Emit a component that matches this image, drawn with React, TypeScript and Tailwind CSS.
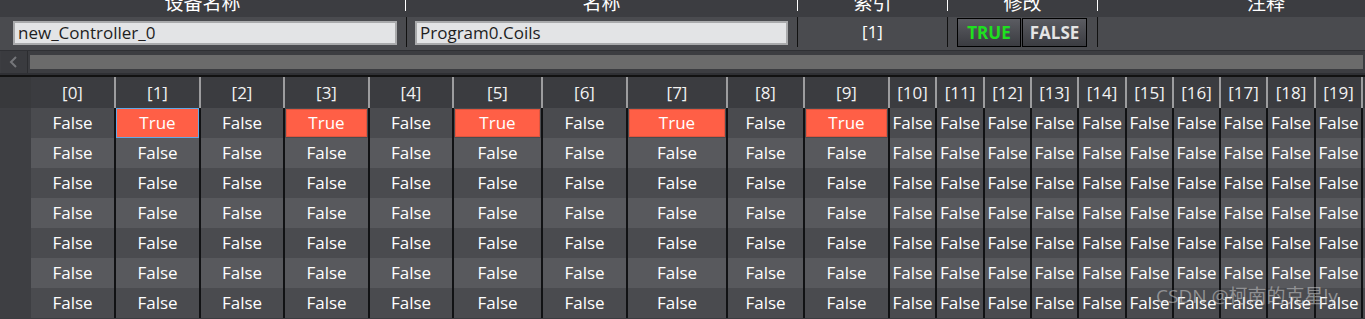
import React from "react";

const colW = [
  "w-[85px]", "w-[85px]", "w-[84px]", "w-[85px]", "w-[84px]",
  "w-[89px]", "w-[85px]", "w-[100px]", "w-[77px]", "w-[85px]",
  "w-[47px]", "w-[48px]", "w-[47px]", "w-[47px]", "w-[48px]",
  "w-[47px]", "w-[47px]", "w-[47px]", "w-[48px]", "w-[47px]",
];

const rows = 7;

function DataCell({ w, value, selected, rowBg }: { w: string; value: boolean; selected: boolean; rowBg: string }) {
  return (
    <div className={`${w} ${rowBg} shrink-0 h-full border-r-2 border-[#111214]`}>
      {value ? (
        selected ? (
          <div className="h-full flex items-center justify-center bg-[#ff5f46] border border-[#62a9e6] text-white pb-[1px]">True</div>
        ) : (
          <div className="h-full p-[1px]">
            <div className="h-full flex items-center justify-center bg-[#ff5f46] border border-[#e0553e] text-white pb-[1px]">True</div>
          </div>
        )
      ) : (
        <div className="h-full flex items-center justify-center text-white pb-[1px]">False</div>
      )}
    </div>
  );
}

export default function App() {
  return (
    <div className="relative w-[1365px] h-[319px] overflow-hidden bg-[#3c3d41] font-['Open_Sans','Noto_Sans_CJK_SC',sans-serif] text-[17px]">
      {/* top header row */}
      <div className="flex h-[17px] overflow-hidden bg-[#3c3d41] text-white text-[19px] font-['Noto_Sans_CJK_SC',sans-serif] items-start">
        <div className="w-[405px] shrink-0 text-center leading-[19px] mt-[-8px]">设备名称</div>
        <div className="w-px h-[11px] bg-white shrink-0" />
        <div className="w-[391px] shrink-0 text-center leading-[19px] mt-[-8px]">名称</div>
        <div className="w-px h-[11px] bg-white shrink-0" />
        <div className="w-[149px] shrink-0 text-center leading-[19px] mt-[-8px]">索引</div>
        <div className="w-px h-[11px] bg-white shrink-0" />
        <div className="w-[149px] shrink-0 text-center leading-[19px] mt-[-8px]">修改</div>
        <div className="w-px h-[11px] bg-white shrink-0" />
        <div className="w-[336px] shrink-0 text-center leading-[19px] mt-[-8px]">注释</div>
      </div>

      {/* input row */}
      <div className="flex h-[33px] bg-[#4a4b4f] items-start">
        <div className="w-[406px] shrink-0 pl-[13px] pt-[4px]">
          <div className="w-[384px] h-[24px] bg-[#e3e4e6] border-2 border-[#a9aaac] text-[#1e1e1e] leading-[19px] pl-[3px] text-[17px]">new_Controller_0</div>
        </div>
        <div className="w-px h-[30px] bg-[#111] shrink-0" />
        <div className="w-[390px] shrink-0 pl-[8px] pt-[4px]">
          <div className="w-[373px] h-[24px] bg-[#e3e4e6] border-2 border-[#a9aaac] text-[#1e1e1e] leading-[19px] pl-[3px] text-[17px]">Program0.Coils</div>
        </div>
        <div className="w-px h-[30px] bg-[#111] shrink-0" />
        <div className="w-[149px] h-[30px] shrink-0 flex items-center justify-center text-white">[1]</div>
        <div className="w-px h-[30px] bg-[#111] shrink-0" />
        <div className="w-[149px] shrink-0 pl-[9px] pt-[1px] flex gap-[1px]">
          <div className="w-[64px] h-[29px] border border-black bg-linear-to-b from-[#5b5c62] to-[#3b3c41] flex items-center justify-center font-bold text-[17px] text-[#1fe01f]">TRUE</div>
          <div className="w-[65px] h-[29px] border border-black bg-linear-to-b from-[#5b5c62] to-[#3b3c41] flex items-center justify-center font-bold text-[17px] text-[#e4e4e4]">FALSE</div>
        </div>
        <div className="w-px h-[30px] bg-[#111] shrink-0" />
      </div>

      {/* scrollbar */}
      <div className="bg-[#2f3034] pt-[1px] pb-[2px]">
        <div className="flex h-[22px] bg-[#3c3d41]">
          <div className="w-[27px] shrink-0 ml-[1px] bg-[#3a3b3f] border-r border-[#2c2d30] flex items-center justify-center">
            <svg width="10" height="12" viewBox="0 0 10 12">
              <polyline points="7,1 2,6 7,11" fill="none" stroke="#75767a" strokeWidth="2" />
            </svg>
          </div>
          <div className="flex-1 px-[2px] py-[4px]">
            <div className="h-full bg-[#6b6b6b]" />
          </div>
        </div>
      </div>
      <div className="h-[2px] bg-[#121212]" />

      {/* grid header */}
      <div className="flex h-[31px] bg-[#3b3c40] text-[#f2f2f2]">
        <div className="w-[31px] shrink-0 bg-[#38393c]" />
        {colW.map((w, i) => (
          <div key={i} className={`${w} shrink-0 border-r-2 border-[#9d9d9f] flex items-center justify-center`}>[{i}]</div>
        ))}
      </div>

      {/* data rows */}
      {Array.from({ length: rows }).map((_, r) => {
        const rowBg = r % 2 === 0 ? "bg-[#4a4b4f]" : "bg-[#58595d]";
        return (
          <div key={r} className={`flex h-[30px] ${rowBg}`}>
            <div className="w-[31px] shrink-0 bg-[#3e3f43]" />
            {colW.map((w, c) => (
              <DataCell
                key={c}
                w={w}
                rowBg={rowBg}
                value={r === 0 && c % 2 === 1 && c < 10}
                selected={r === 0 && c === 1}
              />
            ))}
          </div>
        );
      })}

      {/* watermark */}
      <div className="absolute left-[1156px] top-[284px] text-[19px] leading-[24px] text-[rgba(215,215,215,0.5)] whitespace-nowrap">
        CSDN @柯南的克星ly
      </div>
    </div>
  );
}
